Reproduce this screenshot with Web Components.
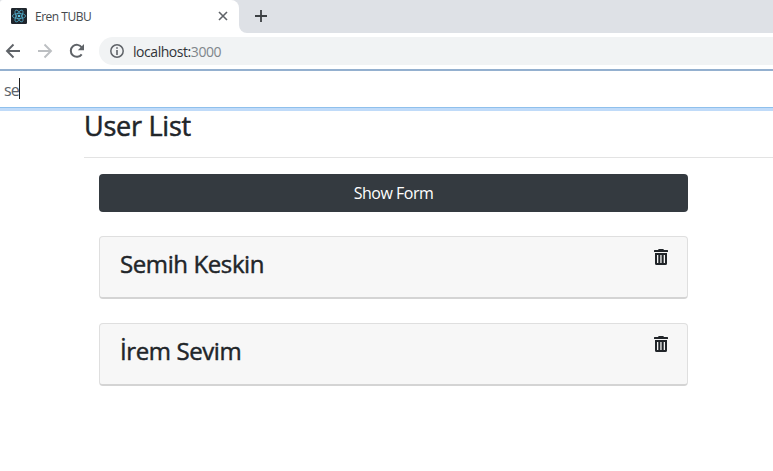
<!DOCTYPE html>
<html lang="en"><head><meta charset="utf-8"><title>Eren TUBU</title>
<style>html,body{margin:0;height:100%;overflow:hidden;background:#fff;font-family:"Open Sans","Noto Sans",sans-serif;color:#212529}</style></head>
<body><app-window></app-window>
<script>
const define = (name, html) => customElements.define(name, class extends HTMLElement {
  constructor() {
    super();
    const t = document.createElement('template');
    t.innerHTML = '<style>*{box-sizing:border-box}</style>' + html;
    this.attachShadow({ mode: 'open' }).append(t.content.cloneNode(true));
  }
});

define('react-icon', `<style>:host{display:block;width:16px;height:16px}svg{display:block}</style>
<svg width="16" height="16" viewBox="0 0 16 16"><rect width="16" height="16" rx="1.2" fill="#20262d"/>
<g fill="none" stroke="#4fa9c6" stroke-width=".8"><ellipse cx="8" cy="8" rx="6.6" ry="2.6"/><ellipse cx="8" cy="8" rx="6.6" ry="2.6" transform="rotate(60 8 8)"/><ellipse cx="8" cy="8" rx="6.6" ry="2.6" transform="rotate(120 8 8)"/></g><circle cx="8" cy="8" r="1.3" fill="#61c5e3"/></svg>`);

define('trash-icon', `<style>:host{display:block;width:14px;height:16px}svg{display:block}</style>
<svg width="14" height="16" viewBox="0 0 14 16"><path fill="#212529" fill-rule="evenodd" d="M.4 1H4l.5-.8q.1-.2.4-.2h4.200q.3 0 .4.200L10 1h3.600q.4 0 .4.400V3H0V1.400Q0 1 .4 1ZM1 4h12v10.500q0 1.500-1.500 1.500h-9Q1 16 1 14.500ZM3 6v8h1.300V6ZM6.300 6v8h1.300V6ZM9.700 6v8h1.300V6Z"/></svg>`);

define('tab-strip', `<style>:host{display:flex;height:33px;background:#dee1e6}
.tab{display:flex;align-items:center;width:239px;height:33px;padding:0 10px 1px 11px;background:#fff;border-radius:3px 8px 0 0;font-size:12px;color:#45494d}
.t{margin-left:8px;flex:1;white-space:nowrap;letter-spacing:-.5px}svg{display:block}
.rest{flex:1;background:#fff}.rest div{height:33px;background:#dee1e6;border-bottom-left-radius:8px;padding:10px 0 0 16px}</style>
<div class="tab"><react-icon></react-icon><span class="t"><slot></slot></span><svg width="12" height="12" viewBox="0 0 12 12"><path d="M2 2l8 8M10 2l-8 8" stroke="#5f6368" stroke-width="1.600"/></svg></div>
<div class="rest"><div><svg width="12" height="12" viewBox="0 0 12 12"><path d="M6 0v12M0 6h12" stroke="#3c4043" stroke-width="1.800"/></svg></div></div>`);

define('nav-bar', `<style>:host{display:flex;align-items:center;height:36px;padding:0 0 0 5px;background:#fff;color:#5f6368}
svg{display:block;flex:none}.b{margin-right:16px}
.url{display:flex;align-items:center;flex:1;height:28px;margin-left:-2px;border-radius:14px 0 0 14px;background:#f1f3f4;padding-left:11px;font-size:14px;color:#303438}
.u{margin-left:9px;white-space:nowrap;letter-spacing:-.45px}i{font-style:normal;color:#80868b}</style>
<svg class="b" width="16" height="16" viewBox="0 0 16 16"><path d="M15 8H2M8.500 1.500L2 8l6.500 6.500" fill="none" stroke="#5f6368" stroke-width="1.900"/></svg>
<svg class="b" width="16" height="16" viewBox="0 0 16 16"><path d="M1 8h13M7.500 1.500L14 8l-6.500 6.500" fill="none" stroke="#bcbfc2" stroke-width="1.900"/></svg>
<svg class="b" width="16" height="16" viewBox="0 0 16 16"><path d="M12.700 11.300A6 6 0 1 1 12.800 4.500" fill="none" stroke="#5f6368" stroke-width="2"/><path d="M15 1v6.200H8.800Z" fill="#5f6368"/></svg>
<div class="url"><svg width="14" height="14" viewBox="0 0 14 14"><circle cx="7" cy="7" r="6.200" fill="none" stroke="#5f6368" stroke-width="1.500"/><path d="M7 3.200v1.600M7 6v5" stroke="#5f6368" stroke-width="1.600"/></svg><span class="u">localhost:<i>3000</i></span></div>`);

define('search-field', `<style>:host{display:block;height:42px;padding-bottom:3px;background:#c0dbf9}
div{display:flex;align-items:center;height:39px;border-top:2px solid #94b0cf;border-bottom:1px solid #8fc0ec;background:#fff;padding:1px 0 0 4px;font-size:16px;color:#5b6269}
span{letter-spacing:-.8px}b{width:1px;height:21px;background:#222;margin-top:-2px}</style>
<div><span><slot></slot></span><b></b></div>`);

define('user-card', `<style>:host{display:flex;justify-content:space-between;height:63px;margin-top:24px;padding:12px 19px 0 20px;background:#f7f7f7;border:1px solid #dfdfdf;border-bottom:2px solid #d4d4d4;border-radius:4px;box-sizing:border-box}
h4{margin:0;font-size:24px;line-height:30px;font-weight:500;-webkit-text-stroke:.45px;white-space:nowrap;letter-spacing:-.4px}</style>
<h4><slot></slot></h4><trash-icon></trash-icon>`);

define('form-button', `<style>:host{display:block}button{display:block;width:100%;height:38px;border:0;border-radius:4px;background:#343a40;color:#fff;font:16px/24px "Open Sans","Noto Sans",sans-serif;letter-spacing:-.5px;padding:0}</style><button><slot></slot></button>`);

define('user-page', `<style>:host{display:block;padding-left:84px}
h3{margin:0;height:47px;border-bottom:1px solid #e3e3e3;font-size:27px;line-height:30px;font-weight:500;-webkit-text-stroke:.5px;letter-spacing:-.25px}
main{width:589px;margin:16px 0 0 15px}</style>
<h3>User List</h3><main><form-button>Show Form</form-button><user-card>Semih Keskin</user-card><user-card>İrem Sevim</user-card></main>`);

define('app-window', `<style>:host{display:block}</style>
<tab-strip>Eren TUBU</tab-strip><nav-bar></nav-bar><search-field>se</search-field><user-page></user-page>`);
</script></body></html>
